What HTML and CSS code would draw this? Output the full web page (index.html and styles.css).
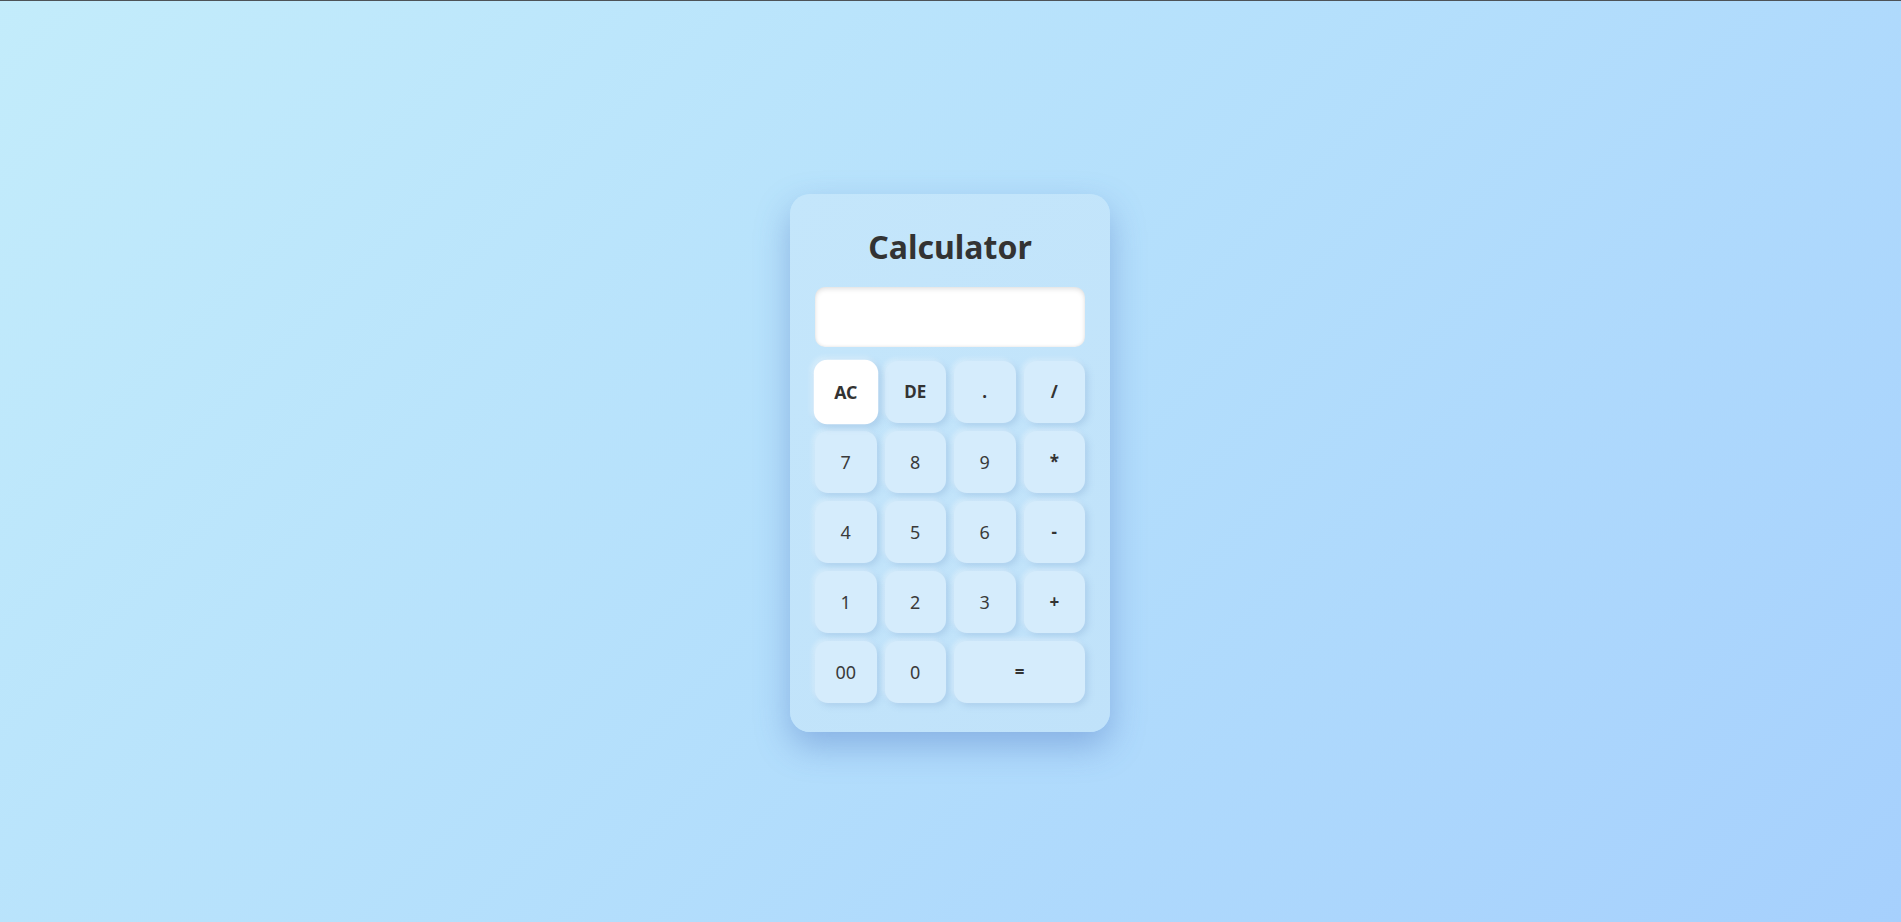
FILE: index.html
```html
<!DOCTYPE html>
<html lang="en">
<head>
<meta charset="utf-8">
<title>Calculator</title>
<link rel="stylesheet" href="styles.css">
</head>
<body>
<main class="calculator">
  <h1 class="title">Calculator</h1>
  <input class="display" type="text" readonly>
  <div class="keys">
    <button class="key op active">AC</button>
    <button class="key op">DE</button>
    <button class="key op">.</button>
    <button class="key op">/</button>
    <button class="key">7</button>
    <button class="key">8</button>
    <button class="key">9</button>
    <button class="key op">*</button>
    <button class="key">4</button>
    <button class="key">5</button>
    <button class="key">6</button>
    <button class="key op">-</button>
    <button class="key">1</button>
    <button class="key">2</button>
    <button class="key">3</button>
    <button class="key op">+</button>
    <button class="key">00</button>
    <button class="key">0</button>
    <button class="key op wide">=</button>
  </div>
</main>
</body>
</html>
```
FILE: styles.css
```css
* { box-sizing: border-box; }
html {
  height: 100%;
  border-top: 1px solid #4d5358;
}
body {
  margin: 0;
  min-height: calc(100vh - 1px);
  display: flex;
  align-items: center;
  justify-content: center;
  background: linear-gradient(135deg, #c3ecfb 0%, #b4dffc 50%, #a6d0fd 100%);
  font-family: "Noto Sans", "Open Sans", sans-serif;
  color: #333;
}
.calculator {
  width: 320px;
  padding: 27px 25px 29px;
  border-radius: 20px;
  background: linear-gradient(135deg, #c4e6fb 0%, #c0e2fa 100%);
  box-shadow: 0 14px 34px rgba(70, 110, 190, 0.4);
  margin: 2px 1px 0 0;
}
.title {
  margin: 0 0 14px;
  font-size: 32px;
  line-height: 52px;
  font-weight: 700;
  text-align: center;
  color: #333;
}
.display {
  display: block;
  width: 100%;
  height: 60px;
  border: none;
  outline: none;
  border-radius: 10px;
  background: #fff;
  box-shadow: inset 0 2px 5px rgba(0, 0, 0, 0.12), inset 0 -1px 3px rgba(0, 0, 0, 0.05);
  margin-bottom: 14px;
}
.keys {
  display: grid;
  grid-template-columns: repeat(4, 1fr);
  grid-auto-rows: 62px;
  gap: 8px;
}
.key {
  border: none;
  border-radius: 13px;
  background: #d5ecfc;
  font-family: "Noto Sans", "Open Sans", sans-serif;
  font-size: 18px;
  font-weight: 400;
  color: #3a3a3a;
  box-shadow: 3px 3px 6px rgba(110, 150, 200, 0.25), -2px -2px 5px rgba(255, 255, 255, 0.35);
  padding: 0;
}
.key.op { font-weight: 700; font-size: 17px; color: #333; }
.key.wide { grid-column: span 2; }
.key.active {
  background: #fff;
  transform: scale(1.04);
}
```
